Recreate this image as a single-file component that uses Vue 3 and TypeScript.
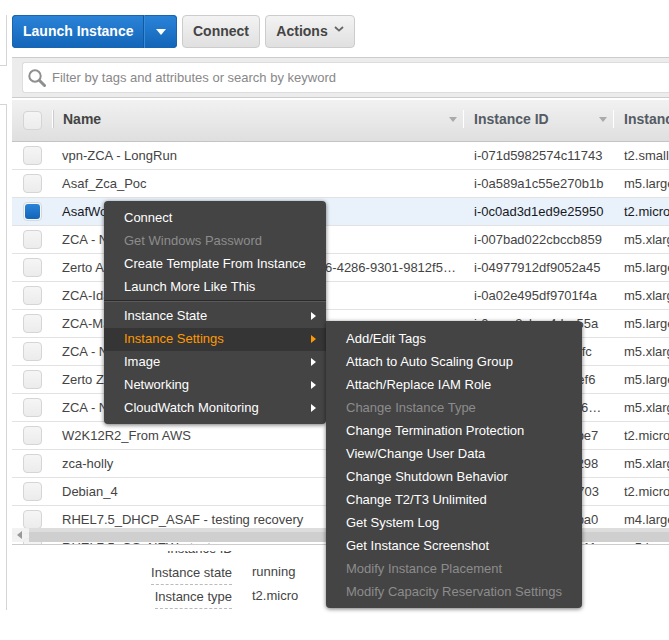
<script setup lang="ts">
interface Row { name: string; id: string; type: string; selected?: boolean }
const rows: Row[] = [
  { name: 'vpn-ZCA - LongRun', id: 'i-071d5982574c11743', type: 't2.small' },
  { name: 'Asaf_Zca_Poc', id: 'i-0a589a1c55e270b1b', type: 'm5.large' },
  { name: 'AsafWorkstation', id: 'i-0c0ad3d1ed9e25950', type: 't2.micro', selected: true },
  { name: 'ZCA - NEW', id: 'i-007bad022cbccb859', type: 'm5.xlarge' },
  { name: 'Zerto Appliance-b4e8a7d2c1c07e3a-a1b2c3d6-4286-9301-9812f5a7c4e1', id: 'i-04977912df9052a45', type: 'm5.large' },
  { name: 'ZCA-Idan', id: 'i-0a02e495df9701f4a', type: 'm5.xlarge' },
  { name: 'ZCA-Main', id: 'i-0ccce3cbcc4dcc55a', type: 'm5.large' },
  { name: 'ZCA - New', id: 'i-0f2af8d3e1b6c5afc', type: 'm5.xlarge' },
  { name: 'Zerto ZCA', id: 'i-0c2f8d3e1b6c47ef6', type: 'm5.large' },
  { name: 'ZCA - NEW', id: 'i-0c2f8d3e1b6c4f26…', type: 'm5.xlarge' },
  { name: 'W2K12R2_From AWS', id: 'i-0c2f8d3e1b6c4cbe7', type: 't2.micro' },
  { name: 'zca-holly', id: 'i-0c2f8d3e1b6c4c298', type: 'm5.xlarge' },
  { name: 'Debian_4', id: 'i-0c2f8d3e1b6c44703', type: 't2.micro' },
  { name: 'RHEL7.5_DHCP_ASAF - testing recovery', id: 'i-0c2f8d3e1b6c4cba0', type: 'm4.large' },
  { name: 'RHEL7.5_OS_NEW - test', id: 'i-0c2f8d3e1b6c4c111', type: 'm5.large' },
]
interface Item { label: string; off?: boolean; sub?: boolean; active?: boolean }
const mainTop: Item[] = [
  { label: 'Connect' },
  { label: 'Get Windows Password', off: true },
  { label: 'Create Template From Instance' },
  { label: 'Launch More Like This' },
]
const mainBottom: Item[] = [
  { label: 'Instance State', sub: true },
  { label: 'Instance Settings', sub: true, active: true },
  { label: 'Image', sub: true },
  { label: 'Networking', sub: true },
  { label: 'CloudWatch Monitoring', sub: true },
]
const subItems: Item[] = [
  { label: 'Add/Edit Tags' },
  { label: 'Attach to Auto Scaling Group' },
  { label: 'Attach/Replace IAM Role' },
  { label: 'Change Instance Type', off: true },
  { label: 'Change Termination Protection' },
  { label: 'View/Change User Data' },
  { label: 'Change Shutdown Behavior' },
  { label: 'Change T2/T3 Unlimited' },
  { label: 'Get System Log' },
  { label: 'Get Instance Screenshot' },
  { label: 'Modify Instance Placement', off: true },
  { label: 'Modify Capacity Reservation Settings', off: true },
]
</script>

<template>
  <div class="page">
    <div class="rail">
      <div class="rail-top"></div>
      <div class="rail-bottom"></div>
    </div>
    <div class="main">
      <div class="toolbar">
        <div class="launch">
          <span class="launch-label">Launch Instance</span>
          <span class="launch-caret"><i></i></span>
        </div>
        <button class="btn connect">Connect</button>
        <button class="btn actions">Actions
          <svg width="10" height="6" viewBox="0 0 10 6"><path d="M1 1l4 3.6L9 1" fill="none" stroke="#666" stroke-width="1.8"/></svg>
        </button>
      </div>
      <div class="filter">
        <div class="search">
          <svg width="18" height="18" viewBox="0 0 18 18">
            <circle cx="7" cy="7" r="5.7" fill="none" stroke="#8f8f8f" stroke-width="2"/>
            <path d="M11.5 11.5L16.5 16.5" stroke="#8f8f8f" stroke-width="3" stroke-linecap="round"/>
          </svg>
          <span>Filter by tags and attributes or search by keyword</span>
        </div>
      </div>
      <div class="thead">
        <div class="cell-check"><span class="check"></span></div>
        <div class="th th-name">Name<i class="sort"></i></div>
        <div class="th th-id">Instance ID<i class="sort"></i></div>
        <div class="th th-type">Instance Type</div>
      </div>
      <div class="tbody">
        <div v-for="r in rows" :key="r.id" class="row" :class="{ selected: r.selected }">
          <div class="cell-check"><span class="check" :class="{ on: r.selected }"></span></div>
          <div class="td td-name">{{ r.name }}</div>
          <div class="td td-id">{{ r.id }}</div>
          <div class="td td-type">{{ r.type }}</div>
        </div>
        <div class="hscroll">
          <svg width="6" height="8" viewBox="0 0 6 8"><path d="M5 0v8L0 4z" fill="#999"/></svg>
          <div class="thumb"></div>
        </div>
      </div>
      <div class="detail">
        <div class="clipped"><span>Instance ID</span></div>
        <div class="kv"><span class="k"><span>Instance state</span></span><span class="v">running</span></div>
        <div class="kv"><span class="k"><span>Instance type</span></span><span class="v">t2.micro</span></div>
      </div>
    </div>

    <div class="menu menu-main">
      <div v-for="i in mainTop" :key="i.label" class="item" :class="{ off: i.off }">{{ i.label }}</div>
      <div class="divider"></div>
      <div v-for="i in mainBottom" :key="i.label" class="item" :class="{ active: i.active }">
        {{ i.label }}<i class="arrow"></i>
      </div>
    </div>
    <div class="menu menu-sub">
      <div v-for="i in subItems" :key="i.label" class="item" :class="{ off: i.off }">{{ i.label }}</div>
    </div>
  </div>
</template>

<style>
html, body { background: #fff; }
</style>

<style scoped>
.page {
  position: relative;
  width: 669px;
  height: 640px;
  overflow: hidden;
  display: flex;
  font-family: "Liberation Sans", Arial, sans-serif;
  font-size: 13px;
  color: #444;
  background: #fff;
}
.rail { width: 7px; flex: none; }
.rail-top {
  height: 51px;
  margin-top: 15px;
  border-right: 1px solid #d5d5d5;
  border-bottom: 1px solid #d5d5d5;
  box-sizing: border-box;
}
.rail-bottom {
  height: 506px;
  margin-top: 38px;
  border-right: 1px solid #d5d5d5;
  border-top: 1px solid #d5d5d5;
  box-sizing: border-box;
}
.main { margin-left: 5px; width: 657px; flex: none; }
.toolbar { display: flex; align-items: stretch; height: 33px; margin-top: 15px; }
.launch {
  display: flex;
  width: 165px;
  height: 33px;
  border-radius: 4px;
  overflow: hidden;
  background: linear-gradient(#2b84d8, #1265b8);
  box-shadow: inset 0 0 0 1px #1a63ae;
  color: #fff;
  font-weight: bold;
  font-size: 14px;
}
.launch-label { width: 131px; padding-left: 11px; line-height: 32px; box-sizing: border-box; }
.launch-caret {
  flex: 1;
  border-left: 1px solid #0f5aa3;
  box-shadow: inset 1px 0 0 #3a8bd6;
  display: flex;
  align-items: center;
  justify-content: center;
}
.launch-caret i {
  width: 0; height: 0;
  border-left: 5px solid transparent;
  border-right: 5px solid transparent;
  border-top: 6px solid #fff;
}
.btn {
  margin-left: 5px;
  height: 33px;
  padding: 0 0 2px;
  border: 1px solid #ccc;
  border-radius: 4px;
  background: linear-gradient(#f3f3f3, #e0e0e0);
  color: #444;
  font: bold 14px "Liberation Sans", Arial, sans-serif;
}
.connect { width: 78px; }
.actions {
  width: 90px;
  display: flex;
  align-items: center;
  justify-content: center;
  gap: 6px;
}
.actions svg { margin-bottom: 3px; }
.filter {
  margin-top: 9px;
  height: 41px;
  box-sizing: border-box;
  padding: 4px 0 4px 10px;
  background: #ececec;
  border-top: 1px solid #ccc;
  border-bottom: 1px solid #ccc;
}
.search {
  height: 31px;
  box-sizing: border-box;
  background: #fff;
  border: 1px solid #ddd;
  border-right: 0;
  border-radius: 3px 0 0 3px;
  display: flex;
  align-items: center;
  padding-left: 5px;
  gap: 6px;
  color: #888;
}
.thead {
  display: flex;
  align-items: center;
  height: 43px;
  margin-top: 1px;
  padding-bottom: 3px;
  box-sizing: border-box;
  background: linear-gradient(#f1f1f1, #dfdfdf);
  border-bottom: 1px solid #c4c4c4;
  border-top: 1px solid #fff;
}
.thead .cell-check { margin-top: 2px; }
.cell-check { width: 40px; flex: none; display: flex; justify-content: center; box-sizing: border-box; }
.check {
  position: relative;
  width: 19px;
  height: 19px;
  box-sizing: border-box;
  border: 1px solid #d5d5d5;
  border-radius: 4px;
  background: linear-gradient(#f5f5f5, #ececec);
}
.check.on { background: #f4f6fa; border-color: #d8d8d8; }
.check.on::after {
  content: '';
  position: absolute;
  inset: 1px;
  border-radius: 3px;
  background: linear-gradient(#2b84d8, #1265b8);
}
.th {
  position: relative;
  height: 18px;
  line-height: 18px;
  font-weight: bold;
  font-size: 14px;
  color: #545b64;
  box-sizing: border-box;
  border-left: 1px solid #fff;
  flex: none;
  overflow: hidden;
  white-space: nowrap;
}
.th-name { width: 411px; padding-left: 10px; color: #444; box-shadow: inset 1px 0 0 #ccc; }
.th-id { width: 150px; padding-left: 10px; }
.th-type { flex: 1; padding-left: 10px; }
.sort {
  position: absolute;
  right: 6px;
  top: 7px;
  width: 0; height: 0;
  border-left: 4px solid transparent;
  border-right: 4px solid transparent;
  border-top: 5px solid #aaa;
}
.tbody {
  position: relative;
  height: 402px;
  overflow: hidden;
  border-bottom: 1px solid #ccc;
}
.row {
  display: flex;
  align-items: center;
  height: 28px;
  box-sizing: border-box;
  border-bottom: 1px solid #e2e2e2;
  color: #444;
}
.row.selected { background: #e9f1fb; color: #16191f; }
.td { flex: none; white-space: nowrap; overflow: hidden; text-overflow: ellipsis; box-sizing: border-box; }
.td-name { width: 411px; padding: 0 6px 0 10px; }
.td-id { width: 150px; padding-left: 11px; }
.td-type { flex: 1; padding-left: 11px; text-overflow: clip; }
.hscroll {
  position: absolute;
  left: 0; right: 0;
  top: 386px;
  height: 14px;
  background: rgba(240, 240, 240, .85);
  display: flex;
  align-items: center;
  padding-left: 5px;
}
.thumb {
  position: absolute;
  left: 17px; right: 0;
  top: 0;
  height: 14px;
  background: linear-gradient(#dddddd 0 4px, #cfcfcf 4px);
}
.detail { height: 65px; overflow: hidden; position: relative; padding-top: 19px; box-sizing: border-box; }
.clipped { position: absolute; left: 155px; top: 6px; height: 2px; overflow: hidden; color: #444; }
.clipped span { display: block; line-height: 15px; margin-top: -10px; }
.kv { display: flex; height: 24px; align-items: flex-start; }
.k { width: 220px; text-align: right; color: #444; line-height: 17px; }
.k span { display: inline-block; border-bottom: 1px dashed #bbb; padding-bottom: 3px; }
.v { margin-left: 20px; line-height: 15px; color: #444; }
.menu {
  position: absolute;
  box-sizing: border-box;
  background: #444;
  color: #fff;
  box-shadow: 0 1px 4px rgba(0, 0, 0, .55);
  font-family: "Liberation Sans", Arial, sans-serif;
}
.menu-main { left: 104px; top: 201px; width: 222px; height: 223px; border-radius: 4px; padding-top: 6px; }
.menu-sub { left: 326px; top: 321px; width: 256px; height: 287px; padding-top: 7px; border-radius: 0 4px 4px 4px; }
.item {
  position: relative;
  height: 23px;
  line-height: 22px;
  padding-left: 20px;
  white-space: nowrap;
}
.item.off { color: #8c8c8c; }
.item.active { color: #f90; background: #353535; }
.divider { height: 1px; background: #2a2a2a; border-bottom: 1px solid #5a5a5a; margin: 1px 0 3px; }
.arrow {
  position: absolute;
  right: 10px;
  top: 7px;
  width: 0; height: 0;
  border-top: 4px solid transparent;
  border-bottom: 4px solid transparent;
  border-left: 5px solid #fff;
}
.item.active .arrow { border-left-color: #f90; }
</style>
